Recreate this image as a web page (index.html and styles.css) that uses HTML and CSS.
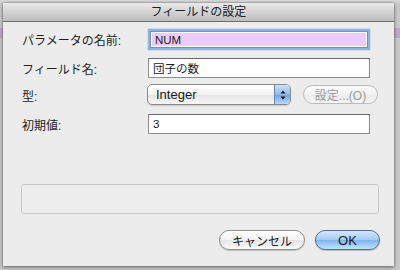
FILE: index.html
```html
<!DOCTYPE html>
<html lang="ja">
<head>
<meta charset="utf-8">
<link rel="stylesheet" href="styles.css">
</head>
<body>
<div class="backdrop">
  <div class="dialog">
    <div class="titlebar">フィールドの設定</div>
    <div class="content">
      <div class="row r1">
        <label class="lbl">パラメータの名前:</label>
        <div class="field focus"><span>NUM</span></div>
      </div>
      <div class="row r2">
        <label class="lbl">フィールド名:</label>
        <div class="field"><span>団子の数</span></div>
      </div>
      <div class="row r3">
        <label class="lbl top">型:</label>
        <div class="popup">
          <span class="popup-text">Integer</span>
          <span class="popup-arrows">
            <svg width="8" height="12" viewBox="0 0 8 12"><path d="M4 1.5 L6.5 4.5 H1.5 Z M4 10.5 L6.5 7.5 H1.5 Z" fill="#1a1a1a"/></svg>
          </span>
        </div>
        <div class="btn disabled">設定...(O)</div>
      </div>
      <div class="row r4">
        <label class="lbl">初期値:</label>
        <div class="field"><span>3</span></div>
      </div>
      <div class="msgbox"></div>
      <div class="buttons">
        <div class="btn cancel">キャンセル</div>
        <div class="btn ok">OK</div>
      </div>
    </div>
  </div>
</div>
</body>
</html>
```
FILE: styles.css
```css
html, body {
  margin: 0;
  padding: 0;
  width: 400px;
  height: 270px;
  overflow: hidden;
}
body {
  font-family: "Liberation Sans", "Noto Sans CJK JP", sans-serif;
  font-size: 13px;
  color: #1a1a1a;
}
.backdrop {
  width: 400px;
  height: 270px;
  box-sizing: border-box;
  padding: 3px 6px 4px 3px;
  background:
    linear-gradient(to bottom, #d8d8d8 0, #cfcfcf 3px, transparent 3px),
    linear-gradient(to bottom, transparent 28px, #b9aac6 28px, #b9aac6 38px, transparent 38px),
    #c9c9c9;
}
.dialog {
  width: 391px;
  height: 263px;
  background: #ececec;
  box-shadow: 0 0 2px rgba(0,0,0,0.5), 0 2px 4px rgba(0,0,0,0.3);
  display: flex;
  flex-direction: column;
}
.titlebar {
  height: 18px;
  flex: none;
  background: linear-gradient(to bottom, #e9e9e9, #bdbdbd);
  border-bottom: 1px solid #6e6e6e;
  border-radius: 4px 4px 0 0;
  text-align: center;
  font-size: 12px;
  line-height: 19px;
  color: #202020;
}
.content {
  flex: 1;
  display: flex;
  flex-direction: column;
}
.row {
  display: flex;
  align-items: center;
  flex: none;
}
.lbl {
  width: 126px;
  padding-left: 19px;
  flex: none;
  font-size: 12px;
  color: #1e1e1e;
}
.lbl.top {
  align-self: flex-start;
  padding-top: 3px;
}
.field {
  width: 222px;
  height: 20px;
  box-sizing: border-box;
  border: 1px solid #8c8c8c;
  border-top-color: #6a6a6a;
  background: #fff;
  font-size: 11.5px;
  display: flex;
  align-items: center;
  padding-left: 4px;
}
.field.focus {
  height: 21px;
  background: #ecccf8;
  border: 2px solid #8fb3df;
  box-shadow: 0 0 1px 0 #5f88c4, inset 0 0 0 1px #6f8fbd, inset 0 0 0 2px #ffffff;
  padding-left: 5px;
}
.r1 { height: 21px; margin-top: 7px; }
.r2 { height: 20px; margin-top: 8px; }
.r3 { height: 21px; margin-top: 6px; }
.r4 { height: 20px; margin-top: 9px; }
.popup {
  width: 144px;
  height: 21px;
  box-sizing: border-box;
  margin-left: -1px;
  border: 1px solid #8a8a8a;
  border-radius: 5px;
  background: linear-gradient(to bottom, #ffffff, #f2f2f2 50%, #e4e4e4 51%, #f6f6f6);
  display: flex;
  align-items: center;
  overflow: hidden;
  box-shadow: 0 1px 1px rgba(0,0,0,0.15);
}
.popup-text {
  flex: 1;
  padding-left: 8px;
  font-size: 13px;
}
.popup-arrows {
  width: 15px;
  height: 100%;
  border-left: 1px solid #6a84b2;
  background: linear-gradient(to bottom, #cfe2f8, #8db9ea 50%, #6ea3e0 51%, #b8dafc);
  display: flex;
  align-items: center;
  justify-content: center;
}
.btn {
  height: 20px;
  box-sizing: border-box;
  border: 1px solid #8f8f8f;
  border-radius: 10px;
  background: linear-gradient(to bottom, #ffffff, #f3f3f3 50%, #e6e6e6 51%, #fafafa);
  display: flex;
  align-items: center;
  justify-content: center;
  font-size: 12px;
  box-shadow: 0 1px 1px rgba(0,0,0,0.2);
}
.btn.disabled {
  width: 75px;
  height: 19px;
  margin-left: 12px;
  color: #9a9a9a;
  border-color: #bcbcbc;
  box-shadow: none;
  background: linear-gradient(to bottom, #fbfbfb, #f1f1f1 50%, #ebebeb 51%, #f6f6f6);
}
.msgbox {
  flex: none;
  margin: 50px 0 0 18px;
  width: 358px;
  height: 30px;
  box-sizing: border-box;
  border: 1px solid #c7c7c7;
  border-radius: 3px;
  background: #ededed;
}
.buttons {
  flex: none;
  display: flex;
  justify-content: flex-end;
  gap: 10px;
  margin-top: 16px;
  padding-right: 14px;
}
.btn.cancel { width: 86px; }
.btn.ok {
  width: 65px;
  border-color: #4b6d9f;
  background: linear-gradient(to bottom, #d6e8fb, #a2cbf4 50%, #7db4ed 51%, #c4e3fd);
  font-size: 13px;
}
```
